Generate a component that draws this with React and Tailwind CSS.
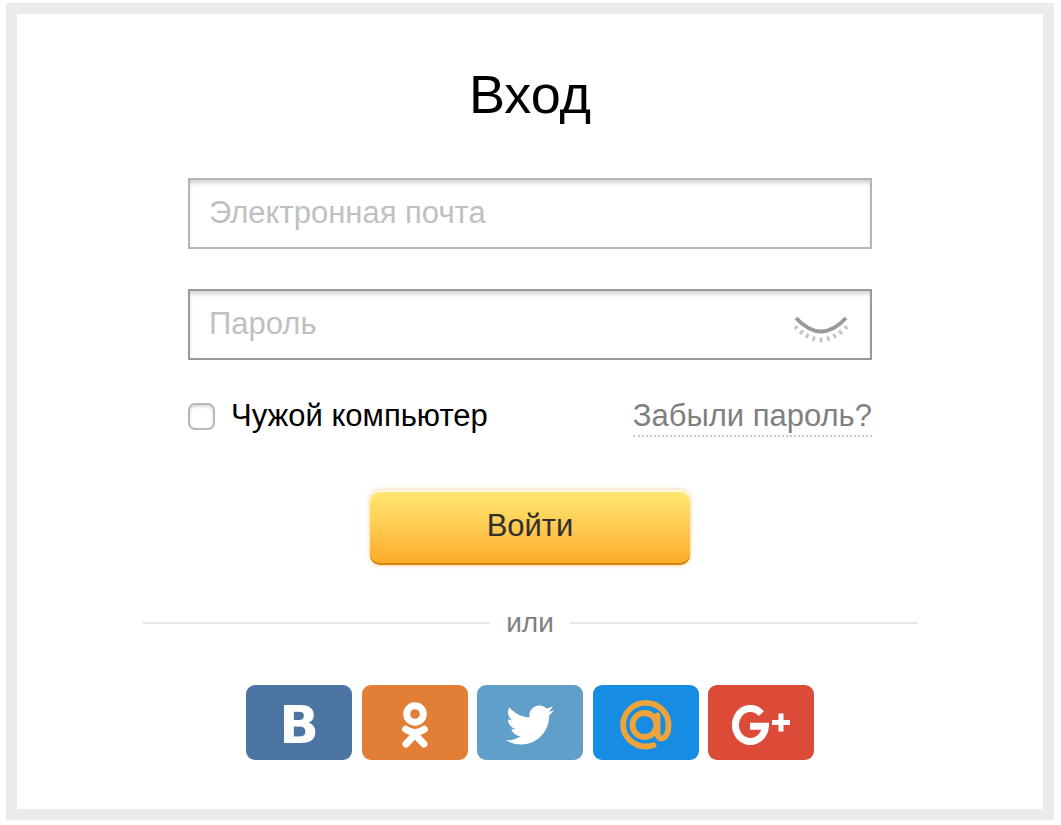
import React from 'react';
import { FaTwitter } from 'react-icons/fa';

const EyeClosedIcon = () => (
    <svg viewBox="0 0 54 28" className="h-7 w-[54px]" fill="none" aria-hidden="true">
        <path d="M2 3 Q27 30 52 3" stroke="#999999" strokeWidth="4" />
        <path
            d="M3.5 11l-3 3M9 15.500l-3 3.500M14.500 19l-2.500 4M20.500 21.500l-1.500 4.500M27 22.500v5M33.500 21.500l1.500 4.500M39.500 19l2.500 4M45 15.500l3 3.500M50.500 11l3 3"
            stroke="#c4c4c4"
            strokeWidth="2.8"
        />
    </svg>
);

const OkIcon = () => (
    <svg viewBox="0 0 26 46" className="h-[46px] w-[26px]" fill="none" stroke="currentColor" strokeWidth="7" strokeLinecap="round" aria-hidden="true">
        <circle cx="13" cy="12" r="8.300" />
        <path d="M3.600 27.200Q13 34 22.400 27.200M13 32.500L4 42M13 32.500L22 42" />
    </svg>
);

const MailIcon = () => (
    <svg viewBox="0 0 52 50" className="h-[50px] w-[52px]" fill="none" stroke="#efa33b" strokeWidth="5.800" strokeLinecap="round" aria-hidden="true">
        <circle cx="24.500" cy="25" r="12" />
        <path d="M37.500 15.500v17c0 9.500 11 8 11-7.500A22.700 21.800 0 1 0 26 46.500c2.500 0 5-.4 7.500-1.200" />
    </svg>
);

const GooglePlusIcon = () => (
    <svg viewBox="0 0 58 40" className="h-10 w-[58px]" fill="none" stroke="currentColor" aria-hidden="true">
        <path d="M29.300 8.600A15 16.500 0 1 0 33.400 21.200H18" strokeWidth="7" />
        <path d="M40 17.500H58M49 8.500V26.500" strokeWidth="5" />
    </svg>
);

const socials = [
    {
        name: 'ВКонтакте',
        color: 'bg-[#4c75a3]',
        icon: <span className="text-[52px] leading-none font-bold font-['DejaVu_Sans',sans-serif]">B</span>,
    },
    { name: 'Одноклассники', color: 'bg-[#e27e35]', icon: <OkIcon /> },
    { name: 'Twitter', color: 'bg-[#5f9fc9]', icon: <FaTwitter className="h-12 w-12" /> },
    { name: 'Mail.ru', color: 'bg-[#168de2]', icon: <MailIcon /> },
    { name: 'Google+', color: 'bg-[#dc4b38]', icon: <GooglePlusIcon /> },
];

const inputClass =
    'block h-[71px] w-full border-2 bg-white px-[19px] pb-0.5 text-[31px] text-black shadow-[inset_0_4px_4px_-1px_rgba(0,0,0,0.18)] placeholder:text-[#c0c0c0] placeholder:opacity-100 focus:outline-none';

const App = () => {
    const [email, setEmail] = React.useState('');
    const [password, setPassword] = React.useState('');
    const [visible, setVisible] = React.useState(false);

    const handleSubmit = (e) => {
        e.preventDefault();
    };

    return (
        <div className="min-h-screen bg-white pt-[3px] pr-[7px] pb-1 pl-[6px] font-['Liberation_Sans',Arial,sans-serif]">
            <main className="border-[11px] border-[#ebebeb] bg-white pt-12 pb-[49px]">
                <h1 className="text-center text-[54px] leading-[64px] text-black">Вход</h1>

                <form className="mx-auto mt-[52px] w-full max-w-[684px]" onSubmit={handleSubmit}>
                    <input
                        type="email"
                        aria-label="Электронная почта"
                        placeholder="Электронная почта"
                        value={email}
                        onChange={(e) => setEmail(e.target.value)}
                        className={`${inputClass} border-[#b5b5b5]`}
                    />

                    <div className="relative mt-10">
                        <input
                            type={visible ? 'text' : 'password'}
                            aria-label="Пароль"
                            placeholder="Пароль"
                            value={password}
                            onChange={(e) => setPassword(e.target.value)}
                            className={`${inputClass} border-[#999999]`}
                        />
                        <button
                            type="button"
                            aria-label="Показать пароль"
                            onClick={() => setVisible(!visible)}
                            className="absolute inset-y-0 right-6 flex items-center pt-2"
                        >
                            <EyeClosedIcon />
                        </button>
                    </div>

                    <div className="mt-[37px] flex items-start justify-between text-[31px] leading-[38px]">
                        <label className="flex items-center text-black">
                            <input
                                type="checkbox"
                                className="mr-4 size-[27px] appearance-none rounded-[7px] border-2 border-[#b8b8b8] bg-white shadow-[inset_0_2px_3px_rgba(0,0,0,0.15)] checked:bg-[#ffcc00]"
                            />
                            Чужой компьютер
                        </label>
                        <a href="#" className="border-b-2 border-dotted border-[#c8c8c8] text-[#808080]">
                            Забыли пароль?
                        </a>
                    </div>

                    <button
                        type="submit"
                        className="mx-auto mt-[53px] block h-[75px] w-80 rounded-[10px] bg-linear-to-b from-[#ffe873] to-[#fdab22] pb-0.5 text-[31px] text-[#303030] shadow-[inset_0_2px_0_#fffbe5,inset_0_-2px_0_#d68610,0_0_5px_rgba(253,160,50,0.55)]"
                    >
                        Войти
                    </button>
                </form>

                <div className="mx-auto mt-10 flex max-w-[774px] items-center gap-4 text-[28px] leading-9 text-[#808080]">
                    <div className="h-[2px] flex-1 bg-[#e6e6e6]" />
                    <span>или</span>
                    <div className="h-[2px] flex-1 bg-[#e6e6e6]" />
                </div>

                <div className="mx-auto mt-11 flex max-w-[568px] justify-between">
                    {socials.map((item) => (
                        <a
                            key={item.name}
                            href="#"
                            aria-label={item.name}
                            className={`flex h-[75px] w-[106px] items-center justify-center rounded-[9px] pt-1 text-white ${item.color}`}
                        >
                            {item.icon}
                        </a>
                    ))}
                </div>
            </main>
        </div>
    );
};

export default App;
